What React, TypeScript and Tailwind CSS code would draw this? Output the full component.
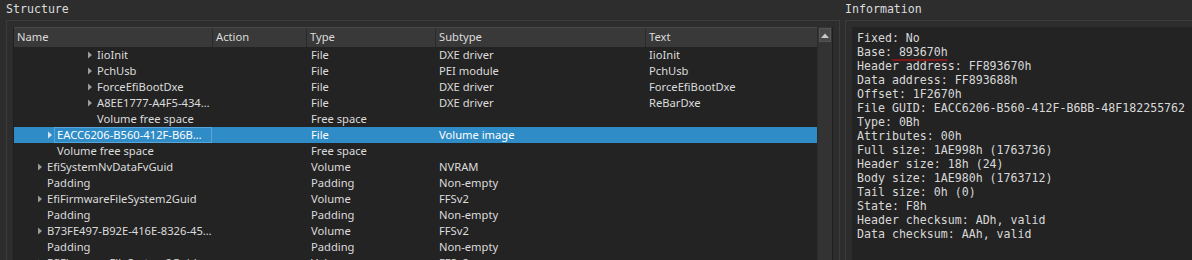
import React from "react";

type Row = {
  name: string;
  pad: string;
  arrow: boolean;
  type: string;
  subtype?: string;
  text?: string;
  selected?: boolean;
};

const rows: Row[] = [
  { name: "IioInit", pad: "pl-[73px]", arrow: true, type: "File", subtype: "DXE driver", text: "IioInit" },
  { name: "PchUsb", pad: "pl-[73px]", arrow: true, type: "File", subtype: "PEI module", text: "PchUsb" },
  { name: "ForceEfiBootDxe", pad: "pl-[73px]", arrow: true, type: "File", subtype: "DXE driver", text: "ForceEfiBootDxe" },
  { name: "A8EE1777-A4F5-434…", pad: "pl-[73px]", arrow: true, type: "File", subtype: "DXE driver", text: "ReBarDxe" },
  { name: "Volume free space", pad: "pl-[73px]", arrow: false, type: "Free space" },
  { name: "EACC6206-B560-412F-B6B…", pad: "pl-[33px]", arrow: true, type: "File", subtype: "Volume image", selected: true },
  { name: "Volume free space", pad: "pl-[33px]", arrow: false, type: "Free space" },
  { name: "EfiSystemNvDataFvGuid", pad: "pl-[23px]", arrow: true, type: "Volume", subtype: "NVRAM" },
  { name: "Padding", pad: "pl-[23px]", arrow: false, type: "Padding", subtype: "Non-empty" },
  { name: "EfiFirmwareFileSystem2Guid", pad: "pl-[23px]", arrow: true, type: "Volume", subtype: "FFSv2" },
  { name: "Padding", pad: "pl-[23px]", arrow: false, type: "Padding", subtype: "Non-empty" },
  { name: "B73FE497-B92E-416E-8326-45…", pad: "pl-[23px]", arrow: true, type: "Volume", subtype: "FFSv2" },
  { name: "Padding", pad: "pl-[23px]", arrow: false, type: "Padding", subtype: "Non-empty" },
  { name: "EfiFirmwareFileSystem2Guid", pad: "pl-[23px]", arrow: true, type: "Volume", subtype: "FFSv2" },
];

const info = [
  "Fixed: No",
  "BASE",
  "Header address: FF893670h",
  "Data address: FF893688h",
  "Offset: 1F2670h",
  "File GUID: EACC6206-B560-412F-B6BB-48F182255762",
  "Type: 0Bh",
  "Attributes: 00h",
  "Full size: 1AE998h (1763736)",
  "Header size: 18h (24)",
  "Body size: 1AE980h (1763712)",
  "Tail size: 0h (0)",
  "State: F8h",
  "Header checksum: ADh, valid",
  "Data checksum: AAh, valid",
];

const mono = "font-['DejaVu_Sans_Mono',monospace] text-[11.6px]";

function Arrow({ light }: { light?: boolean }) {
  return (
    <svg width="10" height="8" viewBox="0 0 10 8" className="shrink-0">
      <path d="M1 0.5 L5 4 L1 7.5 Z" fill={light ? "#d6e6f2" : "#9c9c9c"} />
    </svg>
  );
}

function TreeRow({ row }: { row: Row }) {
  return (
    <div
      className={
        "flex h-[16px] shrink-0 items-center " +
        (row.selected ? "bg-[#308cc6] text-white" : "text-[#dcdcdc]")
      }
    >
      <div className={"w-[198px] h-full flex items-center " + row.pad}>
        {row.arrow ? <Arrow light={row.selected} /> : <span className="w-[10px] shrink-0" />}
        {row.selected ? (
          <span className="h-full flex-1 border border-[#58a5da] pl-[2px] -ml-[3px] leading-[14px] whitespace-nowrap">
            {row.name}
          </span>
        ) : (
          <span className="whitespace-nowrap">{row.name}</span>
        )}
      </div>
      <div className="w-[94px]" />
      <div className="w-[129px] pl-[5px]">{row.type}</div>
      <div className="w-[210px] pl-[4px]">{row.subtype}</div>
      <div className="flex-1 pl-[4px]">{row.text}</div>
    </div>
  );
}

export default function App() {
  return (
    <div className="w-[1192px] h-[260px] overflow-hidden bg-[#2d2d2d] flex text-[11.2px] font-['Noto_Sans',sans-serif]">
      {/* Structure */}
      <div className="w-[840px] flex flex-col min-h-0">
        <div className={"h-[20px] shrink-0 pl-[6px] leading-[18px] text-[#dcdcdc] " + mono}>Structure</div>
        <div className="flex-1 min-h-0 overflow-hidden ml-[6px] border-l border-t border-r border-[#3c3c3c] pl-[6px] pr-[6px] pt-[6px]">
          <div className="flex h-full bg-[#232323] border-l border-r border-[#1f1f1f]">
            <div className="flex-1 flex flex-col min-h-0 overflow-hidden">
              <div className="flex h-[20px] shrink-0 items-center bg-[#393939] border-t border-[#474747] text-[#dcdcdc]">
                <div className="w-[198px] pl-[3px]">Name</div>
                <div className="w-[94px] h-full flex items-center border-l border-[#2a2a2a] pl-[3px]">Action</div>
                <div className="w-[129px] h-full flex items-center border-l border-[#2a2a2a] pl-[3px]">Type</div>
                <div className="w-[210px] h-full flex items-center border-l border-[#2a2a2a] pl-[3px]">Subtype</div>
                <div className="flex-1 h-full flex items-center border-l border-[#2a2a2a] pl-[3px]">Text</div>
              </div>
              {rows.map((row, i) => (
                <TreeRow key={i} row={row} />
              ))}
            </div>
            <div className="w-[15px] bg-[#333333] border-l border-[#2b2b2b] flex flex-col">
              <div className="h-[14px] mx-[1px] mt-[1px] bg-[#474747] border border-[#555555] flex items-center justify-center">
                <svg width="8" height="5" viewBox="0 0 8 5">
                  <path d="M0 5 L4 0.5 L8 5 Z" fill="#c8c8c8" />
                </svg>
              </div>
            </div>
          </div>
        </div>
      </div>

      {/* Information */}
      <div className="flex-1 flex flex-col min-h-0">
        <div className={"h-[20px] shrink-0 pl-[5px] leading-[18px] text-[#dcdcdc] " + mono}>Information</div>
        <div className="flex-1 min-h-0 ml-[5px] border-l border-t border-[#3c3c3c] pl-[6px] pt-[6px]">
          <div className={"h-full bg-[#232323] pl-[5px] pt-[4px] text-[#d8d8d8] " + mono}>
            {info.map((line, i) =>
              line === "BASE" ? (
                <div key={i} className="h-[14px] leading-[14px] whitespace-pre">
                  Base:
                  <span className="underline decoration-[#7e1818] decoration-2 underline-offset-[3px]"> 893670h</span>
                </div>
              ) : (
                <div key={i} className="h-[14px] leading-[14px] whitespace-pre">
                  {line}
                </div>
              )
            )}
          </div>
        </div>
      </div>
    </div>
  );
}
